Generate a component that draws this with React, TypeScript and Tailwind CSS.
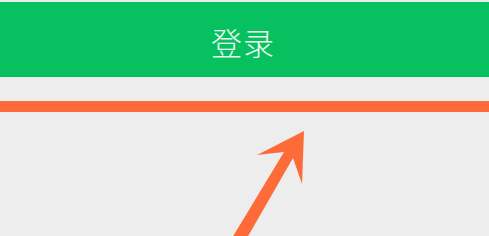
import React from 'react'

const Arrow = () => (
    <svg
        className="absolute left-0 top-0 pointer-events-none"
        width="489"
        height="236"
        viewBox="0 0 489 236"
    >
        <polygon
            points="304,131 257,155 284,152 232,238 247,238 293,158 302,184"
            fill="#ff6b38"
        />
    </svg>
)

const App = () => {
    return (
        <div
            className="relative w-[489px] h-[236px] overflow-hidden bg-[#ededed]"
            style={{ fontFamily: '"Noto Sans CJK SC", "Noto Sans", sans-serif' }}
        >
            <div className="h-[2px] bg-[#e6efe9]" />
            {/* login bar */}
            <div className="h-[75px] bg-[#07c160] flex items-center justify-center">
                <span className="text-[31px] font-light leading-none text-[#eef8f1] mt-[3px] ml-[-3px] tracking-[1px]">
                    登录
                </span>
            </div>
            <div className="h-[24px]" />
            <div className="h-[11px] bg-[#ff6a3a]" />
            <Arrow />
        </div>
    )
}

export default App
